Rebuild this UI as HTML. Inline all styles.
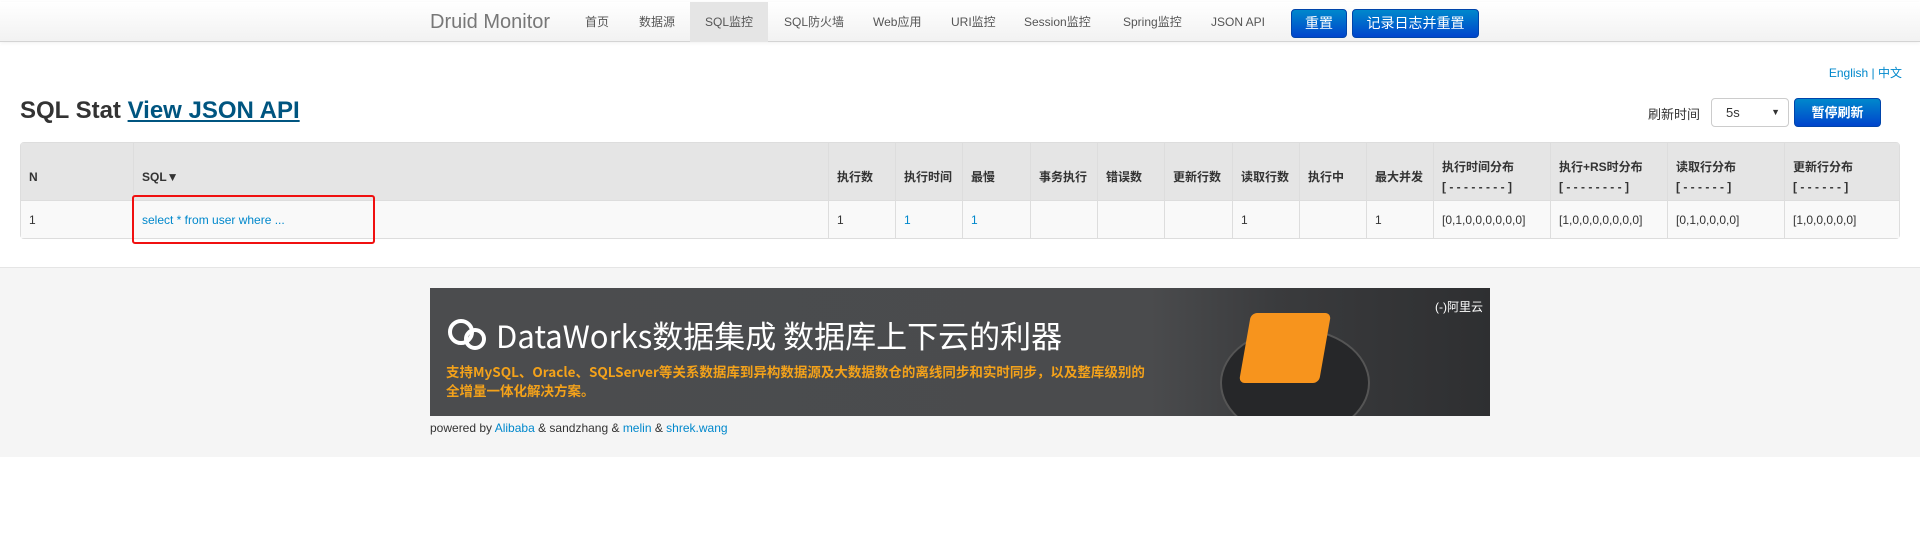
<!DOCTYPE html>
<html><head><meta charset="utf-8"><style>
*{box-sizing:border-box;margin:0;padding:0}
body{width:1920px;height:537px;background:#fff;font-family:"Liberation Sans","Noto Sans CJK SC",sans-serif;font-size:12px;color:#333;position:relative;overflow:hidden}
.nav{position:absolute;left:0;top:2px;width:1920px;height:40px;background:linear-gradient(#fff,#f2f2f2);border-bottom:1px solid #d4d4d4;box-shadow:0 1px 4px rgba(0,0,0,.06)}
.nav span{position:absolute;top:0;line-height:40px;color:#555;font-size:12px}
.brand{font-size:20px!important;color:#777!important}
.act{background:#e5e5e5;text-align:center}
.btn{position:absolute;background:linear-gradient(#0088cc,#0044cc);color:#fff;border-radius:4px;text-align:center;border:1px solid #0044aa;font-size:14px}
a{color:#0088cc;text-decoration:none}
table{position:absolute;left:20px;top:142px;width:1880px;border-collapse:separate;border-spacing:0;border:1px solid #ddd;border-radius:4px;table-layout:fixed}
th,td{border-left:1px solid #ddd;text-align:left;padding:0 8px;font-size:12px;vertical-align:middle}
th:first-child,td:first-child{border-left:none}
th{background:#e5e5e5;height:57px;font-weight:bold;padding-top:10px;line-height:20px}
td{background:#f9f9f9;height:38px;border-top:1px solid #ddd;color:#333}
td.l{color:#0088cc}
.ring{position:absolute;border:4px solid #fff;border-radius:50%}
</style></head><body>
<div class="nav">
<span class="brand" style="left:430px">Druid Monitor</span>
<span style="left:585px">首页</span>
<span style="left:639px">数据源</span>
<span class="act" style="left:690px;width:78px">SQL监控</span>
<span style="left:784px">SQL防火墙</span>
<span style="left:873px">Web应用</span>
<span style="left:951px">URI监控</span>
<span style="left:1024px">Session监控</span>
<span style="left:1123px">Spring监控</span>
<span style="left:1211px">JSON API</span>
</div>
<div class="btn" style="left:1291px;top:9px;width:56px;height:29px;line-height:27px">重置</div>
<div class="btn" style="left:1352px;top:9px;width:127px;height:29px;line-height:27px">记录日志并重置</div>
<div style="position:absolute;right:18px;top:64px;font-size:12px;color:#0088cc">English | 中文</div>
<div style="position:absolute;left:20px;top:97px;font-size:24px;font-weight:bold;color:#333">SQL Stat <a style="color:#005580;text-decoration:underline">View JSON API</a></div>
<div style="position:absolute;left:1648px;top:104px;font-size:13px">刷新时间</div>
<div style="position:absolute;left:1711px;top:98px;width:78px;height:29px;border:1px solid #ccc;border-radius:4px;background:#fff;font-size:13px;line-height:27px;padding-left:14px">5s<span style="position:absolute;right:8px;font-size:9px">▼</span></div>
<div class="btn" style="left:1794px;top:98px;width:87px;height:29px;line-height:27px;font-weight:bold;font-size:13px">暂停刷新</div>
<table>
<colgroup><col style="width:112px"><col style="width:695px"><col style="width:67px"><col style="width:67px"><col style="width:68px"><col style="width:67px"><col style="width:67px"><col style="width:68px"><col style="width:67px"><col style="width:67px"><col style="width:67px"><col style="width:117px"><col style="width:117px"><col style="width:117px"><col></colgroup>
<tr><th>N</th><th>SQL▼</th><th>执行数</th><th>执行时间</th><th>最慢</th><th>事务执行</th><th>错误数</th><th>更新行数</th><th>读取行数</th><th>执行中</th><th>最大并发</th><th>执行时间分布<br>[ - - - - - - - - ]</th><th>执行+RS时分布<br>[ - - - - - - - - ]</th><th>读取行分布<br>[ - - - - - - ]</th><th>更新行分布<br>[ - - - - - - ]</th></tr>
<tr><td>1</td><td class="l">select * from user where ...</td><td>1</td><td class="l">1</td><td class="l">1</td><td></td><td></td><td></td><td>1</td><td></td><td>1</td><td>[0,1,0,0,0,0,0,0]</td><td>[1,0,0,0,0,0,0,0]</td><td>[0,1,0,0,0,0]</td><td>[1,0,0,0,0,0]</td></tr>
</table>
<div style="position:absolute;left:132px;top:195px;width:243px;height:49px;border:2px solid #f01010;border-radius:3px"></div>
<div style="position:absolute;left:0;top:267px;width:1920px;height:190px;background:#f5f5f5;border-top:1px solid #e5e5e5"></div>
<div style="position:absolute;left:430px;top:288px;width:1060px;height:128px;background:linear-gradient(90deg,#4b4c4e 0%,#4a4b4d 68%,#3a3b3d 80%,#2e2f31 100%);overflow:hidden">
<div class="ring" style="left:18px;top:31px;width:26px;height:26px"></div>
<div class="ring" style="left:34px;top:40px;width:22px;height:22px"></div>
<div style="position:absolute;left:66px;top:24px;color:#fff;font-size:31px;font-family:'Noto Sans CJK SC',sans-serif;white-space:nowrap">DataWorks数据集成 数据库上下云的利器</div>
<div style="position:absolute;left:16px;top:74px;color:#f4a21a;font-size:13.5px;font-weight:bold;line-height:19px;width:712px;font-family:'Noto Sans CJK SC',sans-serif">支持MySQL、Oracle、SQLServer等关系数据库到异构数据源及大数据数仓的离线同步和实时同步，以及整库级别的全增量一体化解决方案。</div>
<div style="position:absolute;left:790px;top:40px;width:150px;height:110px;border-radius:50%;background:#262729;border:2px solid #555"></div>
<div style="position:absolute;left:815px;top:25px;width:80px;height:70px;background:#f7941d;transform:skewX(-10deg);border-radius:6px"></div>
<div style="position:absolute;left:1005px;top:10px;color:#fff;font-size:12px">(-)阿里云</div>
</div>
<div style="position:absolute;left:430px;top:421px;font-size:12px;color:#333">powered by <a>Alibaba</a> &amp; sandzhang &amp; <a>melin</a> &amp; <a>shrek.wang</a></div>
</body></html>
